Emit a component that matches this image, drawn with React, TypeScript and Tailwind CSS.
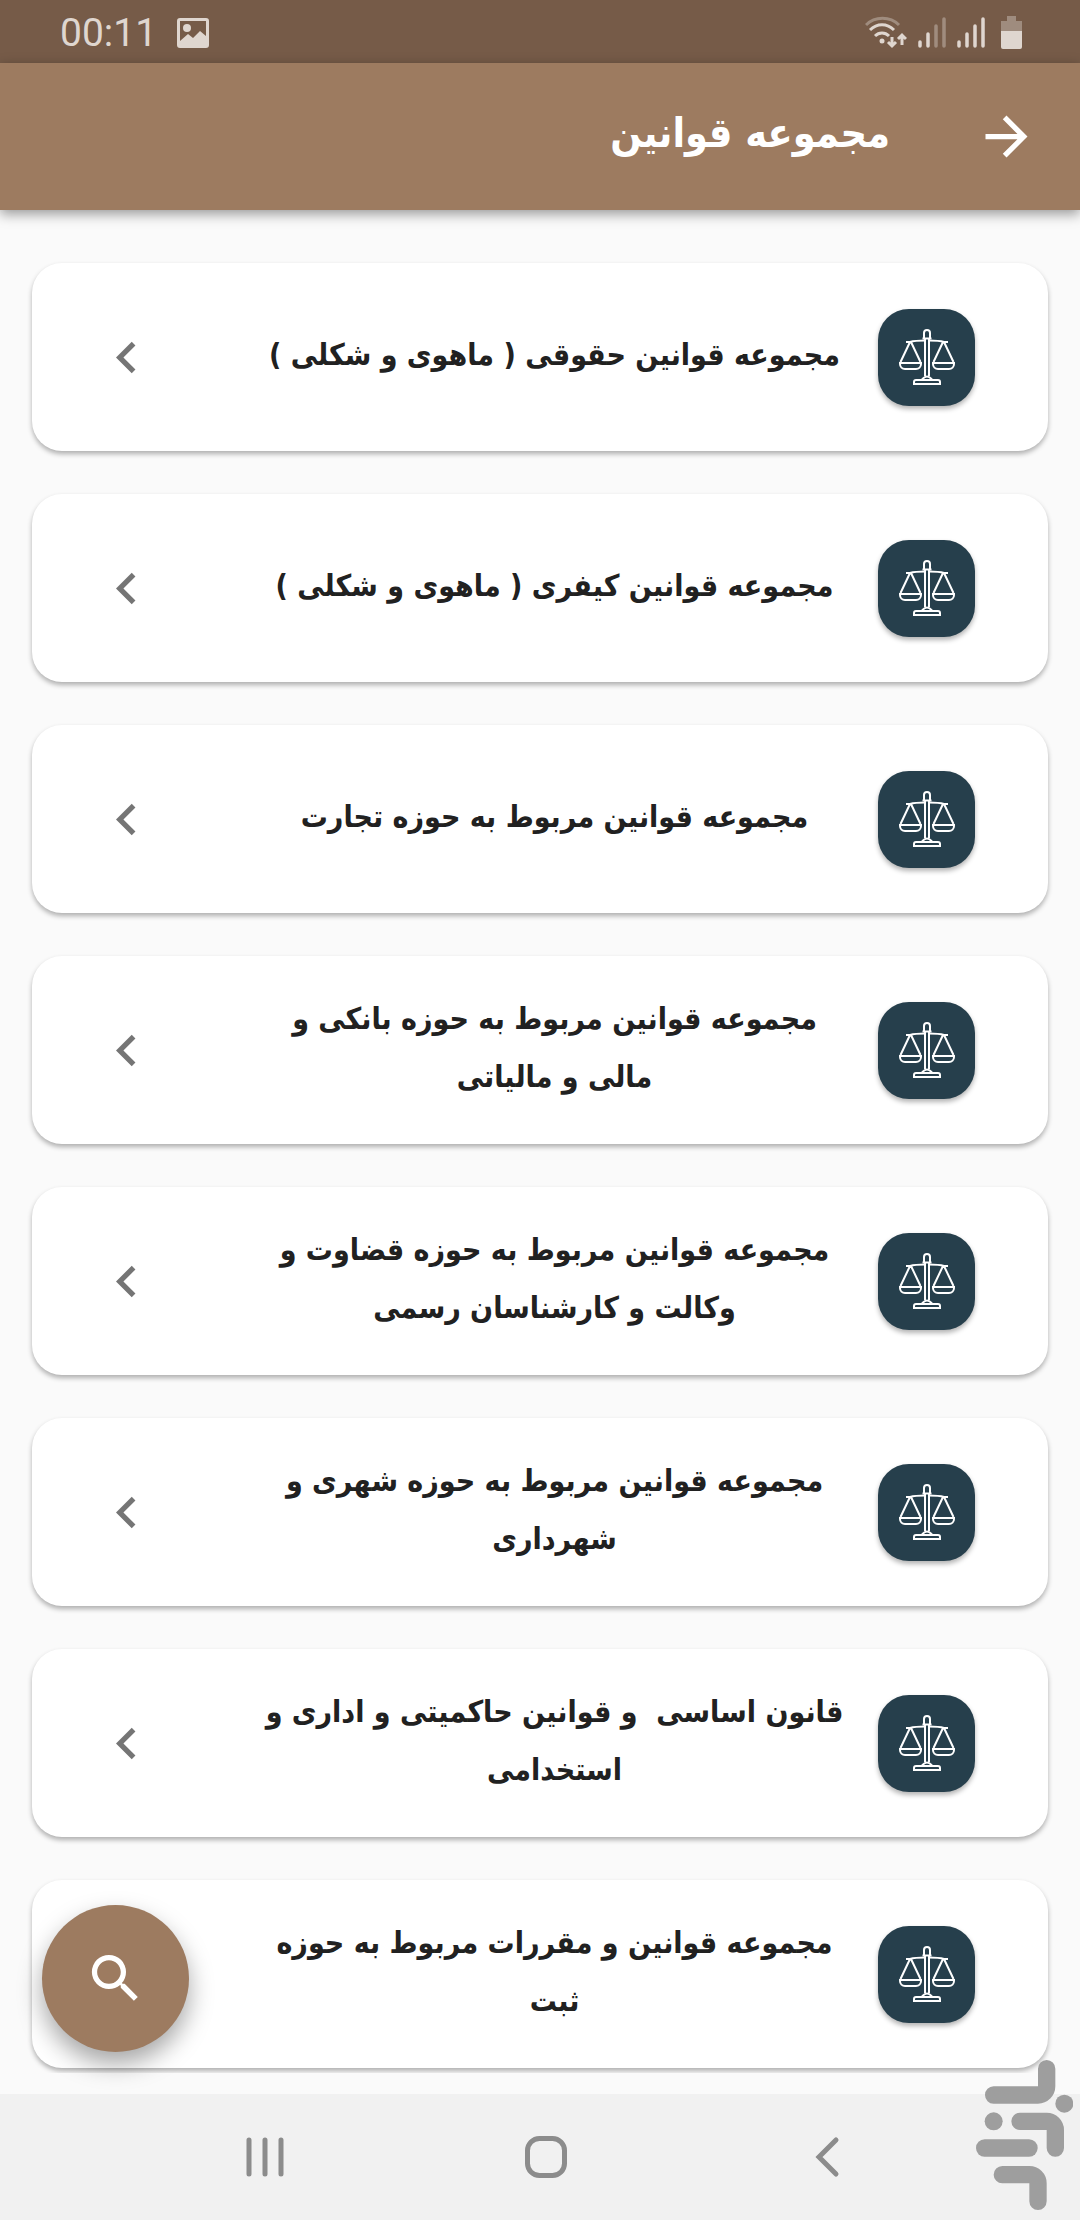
import { MdArrowForward, MdChevronLeft, MdSearch } from "react-icons/md";

const laws = [
  "مجموعه قوانین حقوقی ( ماهوی و شکلی )",
  "مجموعه قوانین کیفری ( ماهوی و شکلی )",
  "مجموعه قوانین مربوط به حوزه تجارت",
  "مجموعه قوانین مربوط به حوزه بانکی و مالی و مالیاتی",
  "مجموعه قوانین مربوط به حوزه قضاوت و وکالت و کارشناسان رسمی",
  "مجموعه قوانین مربوط به حوزه شهری و شهرداری",
  "قانون اساسی  و قوانین حاکمیتی و اداری و استخدامی",
  "مجموعه قوانین و مقررات مربوط به حوزه ثبت",
];

function ScalesIcon() {
  return (
    <svg className="h-14 w-14" viewBox="0 0 56 56" fill="none" stroke="white" strokeWidth="2" aria-hidden="true">
      <path d="M25 9V4a3 3 0 0 1 6 0v5M23.500 9.500h9M26 10v37M30 10v37" />
      <path d="M7 13h4c5-1.500 10-1.500 15-1.500M49 13h-4c-5-1.500-10-1.500-15-1.500" />
      <path d="M11 13 1.500 33M12 13l9.500 20M44 13l-9.500 20M45 13l9.500 20" />
      <path d="M1 34h21v1a5 5 0 0 1-5 5H6a5 5 0 0 1-5-5zM34 34h21v1a5 5 0 0 1-5 5H39a5 5 0 0 1-5-5z" />
      <path d="M15 55v-2a2 2 0 0 1 2-2h22a2 2 0 0 1 2 2v2zM22 51c2 0 2-3.500 6-3.500s4 3.500 6 3.500" />
    </svg>
  );
}

function StatusBar() {
  return (
    <div className="flex h-[63px] items-center justify-between bg-[#765b48] pt-0.5 pr-[58px] pl-[60px] text-[#dfd6cf]" dir="ltr">
      <div className="flex items-center gap-5">
        <span className="font-[Roboto] text-[39px] leading-[44px]">00:11</span>
        <svg className="h-[30px] w-8" viewBox="0 0 32 30" fill="currentColor" aria-hidden="true">
          <path fillRule="evenodd" d="M3 0h26a3 3 0 0 1 3 3v24a3 3 0 0 1-3 3H3a3 3 0 0 1-3-3V3a3 3 0 0 1 3-3zm0 3v20l8-7 5 4 7-7 6 5V3z" />
          <circle cx="10" cy="10" r="4" />
        </svg>
      </div>
      <div className="flex items-center">
        <svg className="h-[34px] w-[42px]" viewBox="0 0 42 34" fill="none" stroke="currentColor" strokeWidth="3" aria-hidden="true">
          <path opacity=".4" d="M1 9c9-9 24-9 33 0" />
          <path d="M5 14c7-7 17-7 24 0M10 20c4-4 10-4 14 0" />
          <circle cx="17" cy="25" r="2.500" fill="currentColor" stroke="none" />
          <path d="M27 21v9M23 26l4 4 4-4M37 29v-9M33 23l4-4 4 4" />
        </svg>
        <svg className="ml-[11px] h-[34px] w-7" viewBox="0 0 28 34" stroke="currentColor" strokeWidth="3.500" strokeLinecap="round" aria-hidden="true">
          <path d="M2 26v4M10 18v12" />
          <path opacity=".4" d="M18 10v20M26 3v27" />
        </svg>
        <svg className="ml-[11px] h-[34px] w-7" viewBox="0 0 28 34" stroke="currentColor" strokeWidth="3.500" strokeLinecap="round" aria-hidden="true">
          <path d="M2 26v4M10 18v12M18 10v20M26 3v27" />
        </svg>
        <svg className="ml-4 h-[34px] w-[21px]" viewBox="0 0 21 34" fill="currentColor" aria-hidden="true">
          <path opacity=".4" d="M6 0h9v5h6v10H0V5h6z" />
          <path d="M0 15h21v16a2 2 0 0 1-2 2H2a2 2 0 0 1-2-2z" />
        </svg>
      </div>
    </div>
  );
}

function LawCard({ title }: { title: string }) {
  return (
    <button
      type="button"
      className="flex min-h-[188px] w-full items-center rounded-[30px] bg-white pr-[73px] pl-[63px] shadow-[0_3px_5px_rgba(0,0,0,0.3)]"
    >
      <span className="flex h-[97px] w-[97px] shrink-0 items-center justify-center rounded-[31px] bg-[#263f4c] shadow-[0_3px_5px_rgba(0,0,0,0.3)]">
        <ScalesIcon />
      </span>
      <span className="flex-1 px-7 pb-1 text-center text-[30px] leading-[58px] font-bold whitespace-pre-wrap text-[#212121]">
        {title}
      </span>
      <MdChevronLeft className="mr-[73px] h-[63px] w-[63px] shrink-0 text-[#757575]" />
    </button>
  );
}

function NavBar() {
  return (
    <nav className="grid h-[126px] shrink-0 grid-cols-3 items-center bg-[#f1f1f1] pr-[113px] pl-[124px] text-[#8c8c8c]" dir="ltr">
      <button type="button" aria-label="برنامه‌های اخیر" className="flex justify-center">
        <svg className="h-[42px] w-[42px]" viewBox="0 0 42 42" stroke="currentColor" strokeWidth="5" strokeLinecap="round">
          <path d="M5 4v34M21 4v34M37 4v34" />
        </svg>
      </button>
      <button type="button" aria-label="خانه" className="flex justify-center">
        <svg className="h-[42px] w-[42px]" viewBox="0 0 42 42" fill="none" stroke="currentColor" strokeWidth="5">
          <rect x="2.500" y="2.500" width="37" height="37" rx="12" />
        </svg>
      </button>
      <button type="button" aria-label="بازگشت" className="flex justify-center">
        <svg className="h-[42px] w-[42px]" viewBox="0 0 42 42" fill="none" stroke="currentColor" strokeWidth="5" strokeLinecap="round">
          <path d="M30 4 13 21l17 17" />
        </svg>
      </button>
    </nav>
  );
}

function StoreMark() {
  return (
    <svg className="absolute right-[7px] bottom-[10px] h-[150px] w-[97px] text-[#9e9e9e]" viewBox="108 90 291 450" fill="none" stroke="currentColor" strokeWidth="52" strokeLinecap="round" aria-hidden="true">
      <path d="M161 195h133a26 26 0 0 0 26-26v-53" />
      <path d="M240 274h80a26 26 0 0 1 26 26v54" />
      <path d="M134 354h133" />
      <path d="M187 434h81a26 26 0 0 1 26 26v54" />
      <circle cx="373" cy="221" r="27" fill="currentColor" stroke="none" />
      <circle cx="161" cy="274" r="27" fill="currentColor" stroke="none" />
    </svg>
  );
}

export default function App() {
  return (
    <div className="relative flex h-screen flex-col bg-[#fafafa] font-['DejaVu_Sans_Condensed','DejaVu_Sans',sans-serif]" dir="rtl">
      <StatusBar />
      <header className="flex h-[147px] shrink-0 items-center bg-[#9d7b60] pr-[42px] text-white shadow-[0_4px_12px_rgba(0,0,0,0.4)]">
        <button type="button" aria-label="بازگشت">
          <MdArrowForward className="h-[63px] w-[63px]" />
        </button>
        <h1 className="pr-[85px] pb-2 text-[41px] leading-[58px] font-bold">مجموعه قوانین</h1>
      </header>

      <main className="mb-[21px] min-h-0 flex-1 overflow-hidden px-8 pt-[53px]">
        <ul className="flex flex-col gap-[43px]">
          {laws.map((title) => (
            <li key={title}>
              <LawCard title={title} />
            </li>
          ))}
        </ul>
      </main>

      <button
        type="button"
        aria-label="جستجو"
        className="absolute bottom-[168px] left-[42px] flex h-[147px] w-[147px] items-center justify-center rounded-full bg-[#9d7b60] text-white shadow-[0_12px_24px_rgba(0,0,0,0.35)]"
      >
        <MdSearch className="h-[63px] w-[63px]" />
      </button>
      <NavBar />
      <StoreMark />
    </div>
  );
}
